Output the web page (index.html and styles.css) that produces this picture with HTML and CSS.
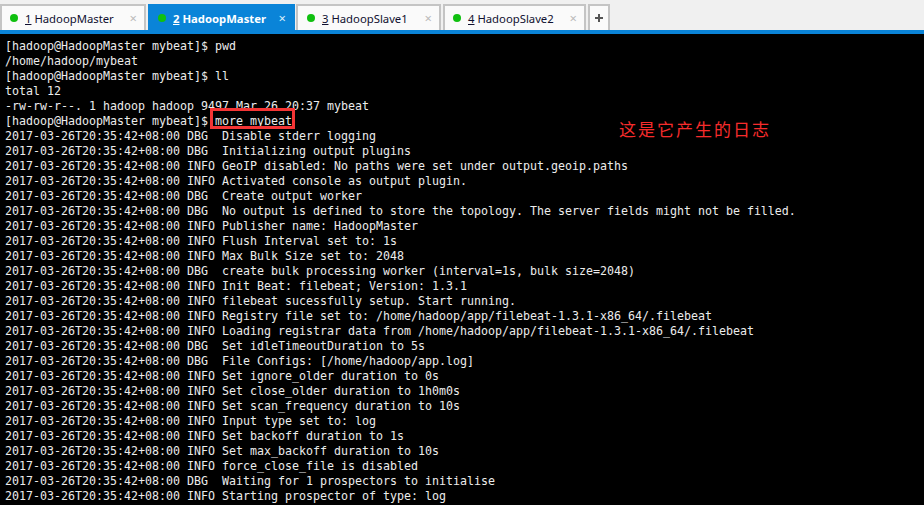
FILE: index.html
```html
<!DOCTYPE html>
<html lang="en">
<head>
<meta charset="utf-8">
<title>Terminal</title>
<link rel="stylesheet" href="styles.css">
</head>
<body>
<div class="tabbar">
  <div class="tab t1"><span class="dot"></span><span class="label"><u>1</u> HadoopMaster</span><span class="close">×</span></div>
  <div class="tab t2 active"><span class="dot"></span><span class="label"><u>2</u> HadoopMaster</span><span class="close">×</span></div>
  <div class="tab t3"><span class="dot"></span><span class="label"><u>3</u> HadoopSlave1</span><span class="close">×</span></div>
  <div class="tab t4"><span class="dot"></span><span class="label"><u>4</u> HadoopSlave2</span><span class="close">×</span></div>
  <div class="tab add"><svg class="plus" width="10" height="10" viewBox="0 0 10 10"><path d="M4 1h2v3h3v2H6v3H4V6H1V4h3z"/></svg></div>
</div>
<main class="term">
<pre class="log">[hadoop@HadoopMaster mybeat]$ pwd
/home/hadoop/mybeat
[hadoop@HadoopMaster mybeat]$ ll
total 12
-rw-rw-r--. 1 hadoop hadoop 9497 Mar 26 20:37 mybeat
[hadoop@HadoopMaster mybeat]$ more mybeat
2017-03-26T20:35:42+08:00 DBG  Disable stderr logging
2017-03-26T20:35:42+08:00 DBG  Initializing output plugins
2017-03-26T20:35:42+08:00 INFO GeoIP disabled: No paths were set under output.geoip.paths
2017-03-26T20:35:42+08:00 INFO Activated console as output plugin.
2017-03-26T20:35:42+08:00 DBG  Create output worker
2017-03-26T20:35:42+08:00 DBG  No output is defined to store the topology. The server fields might not be filled.
2017-03-26T20:35:42+08:00 INFO Publisher name: HadoopMaster
2017-03-26T20:35:42+08:00 INFO Flush Interval set to: 1s
2017-03-26T20:35:42+08:00 INFO Max Bulk Size set to: 2048
2017-03-26T20:35:42+08:00 DBG  create bulk processing worker (interval=1s, bulk size=2048)
2017-03-26T20:35:42+08:00 INFO Init Beat: filebeat; Version: 1.3.1
2017-03-26T20:35:42+08:00 INFO filebeat sucessfully setup. Start running.
2017-03-26T20:35:42+08:00 INFO Registry file set to: /home/hadoop/app/filebeat-1.3.1-x86_64/.filebeat
2017-03-26T20:35:42+08:00 INFO Loading registrar data from /home/hadoop/app/filebeat-1.3.1-x86_64/.filebeat
2017-03-26T20:35:42+08:00 DBG  Set idleTimeoutDuration to 5s
2017-03-26T20:35:42+08:00 DBG  File Configs: [/home/hadoop/app.log]
2017-03-26T20:35:42+08:00 INFO Set ignore_older duration to 0s
2017-03-26T20:35:42+08:00 INFO Set close_older duration to 1h0m0s
2017-03-26T20:35:42+08:00 INFO Set scan_frequency duration to 10s
2017-03-26T20:35:42+08:00 INFO Input type set to: log
2017-03-26T20:35:42+08:00 INFO Set backoff duration to 1s
2017-03-26T20:35:42+08:00 INFO Set max_backoff duration to 10s
2017-03-26T20:35:42+08:00 INFO force_close_file is disabled
2017-03-26T20:35:42+08:00 DBG  Waiting for 1 prospectors to initialise
2017-03-26T20:35:42+08:00 INFO Starting prospector of type: log</pre>
<div class="mark"></div>
<div class="note">这是它产生的日志</div>
</main>
</body>
</html>
```
FILE: styles.css
```css
html, body {
  margin: 0;
  height: 100%;
  overflow: hidden;
  background: #000;
}

.tabbar {
  display: flex;
  align-items: flex-end;
  gap: 2px;
  height: 30px;
  padding-top: 4px;
  box-sizing: border-box;
  background: #f0f0f0;
  font-family: "Noto Sans", sans-serif;
  font-size: 11.3px;
  color: #101030;
}

.tab {
  display: flex;
  align-items: center;
  box-sizing: border-box;
  height: 26px;
  background: #fafafa;
  border: 2px solid #c4c4c4;
  border-bottom: 0;
  padding-left: 8px;
}

.t1 { width: 146px; }
.t2 { width: 147px; }
.t3 { width: 145px; margin-left: -1px; padding-left: 9px; }
.t4 { width: 143px; }

.active {
  background: #0a84d8;
  border-color: #0a84d8;
  color: #fff;
  font-weight: 700;
}

.dot {
  width: 8px;
  height: 8px;
  border-radius: 50%;
  background: #10c010;
  margin-right: 7px;
  flex: none;
}

.label {
  flex: 1;
  white-space: pre;
  padding-top: 1px;
}

.close {
  font-size: 13px;
  line-height: 14px;
  color: #bbb;
  margin-right: 7px;
  font-weight: 400;
}

.active .close { color: #d8ecfa; }

.add {
  width: 22px;
  padding-left: 0;
  justify-content: center;
}

.plus { fill: #555; }

.term {
  position: relative;
  height: 471px;
  border-top: 4px solid #0a84d8;
  box-sizing: content-box;
  background: #000;
  overflow: hidden;
}

.log {
  margin: 0;
  padding: 5px 0 0 5px;
  font-family: "DejaVu Sans Mono", monospace;
  font-size: 11.63px;
  line-height: 15px;
  color: #ececec;
}

.mark {
  position: absolute;
  left: 210px;
  top: 74px;
  width: 79px;
  height: 15px;
  border: 3px solid #f43535;
}

.note {
  position: absolute;
  left: 619px;
  top: 85px;
  font-family: "Noto Sans CJK SC", sans-serif;
  font-size: 17px;
  line-height: 20px;
  letter-spacing: 2px;
  font-weight: 400;
  color: #f62c2c;
}
```
